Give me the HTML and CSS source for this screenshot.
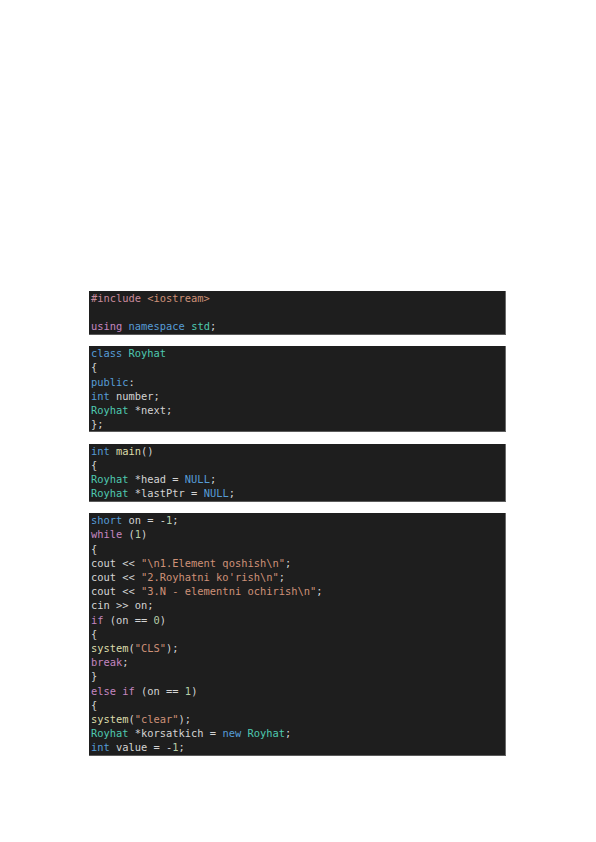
FILE: index.html
```html
<!DOCTYPE html>
<html>
<head>
<meta charset="utf-8">
<link rel="stylesheet" href="styles.css">
</head>
<body>
<div class="page">
<pre class="code"><span class="pp">#include</span> <span class="str">&lt;iostream&gt;</span>

<span class="ctl">using</span> <span class="kw">namespace</span> <span class="ty">std</span>;</pre>
<pre class="code"><span class="kw">class</span> <span class="ty">Royhat</span>
{
<span class="kw">public</span>:
<span class="kw">int</span> number;
<span class="ty">Royhat</span> *next;
};</pre>
<pre class="code"><span class="kw">int</span> <span class="fn">main</span>()
{
<span class="ty">Royhat</span> *head = <span class="kw">NULL</span>;
<span class="ty">Royhat</span> *lastPtr = <span class="kw">NULL</span>;</pre>
<pre class="code"><span class="kw">short</span> on = -<span class="num">1</span>;
<span class="ctl">while</span> (<span class="num">1</span>)
{
cout &lt;&lt; <span class="str">"\n1.Element qoshish\n"</span>;
cout &lt;&lt; <span class="str">"2.Royhatni ko'rish\n"</span>;
cout &lt;&lt; <span class="str">"3.N - elementni ochirish\n"</span>;
cin &gt;&gt; on;
<span class="ctl">if</span> (on == <span class="num">0</span>)
{
<span class="fn">system</span>(<span class="str">"CLS"</span>);
<span class="ctl">break</span>;
}
<span class="ctl">else</span> <span class="ctl">if</span> (on == <span class="num">1</span>)
{
<span class="fn">system</span>(<span class="str">"clear"</span>);
<span class="ty">Royhat</span> *korsatkich = <span class="kw">new</span> <span class="ty">Royhat</span>;
<span class="kw">int</span> value = -<span class="num">1</span>;</pre>
</div>
</body>
</html>
```
FILE: styles.css
```css
html, body {
  margin: 0;
  padding: 0;
  background: #ffffff;
}
.page {
  width: 417px;
  margin-left: 89px;
  padding-top: 291px;
  display: flex;
  flex-direction: column;
  gap: 11.5px;
}
.code {
  margin: 0;
  background: #1e1e1e;
  color: #d4d4d4;
  font-family: "DejaVu Sans Mono", "Liberation Mono", monospace;
  font-size: 10.4px;
  line-height: 14.2px;
  padding: 0 0 0 2px;
  border-bottom: 1px solid #5a5a5a;
  border-right: 1px solid #6a6a6a;
  white-space: pre;
  overflow: hidden;
}
.pp { color: #c98a9c; }
.str { color: #ce9178; }
.kw { color: #569cd6; }
.ty { color: #4ec9b0; }
.fn { color: #dcdcaa; }
.ctl { color: #c586c0; }
.num { color: #b5cea8; }
```
